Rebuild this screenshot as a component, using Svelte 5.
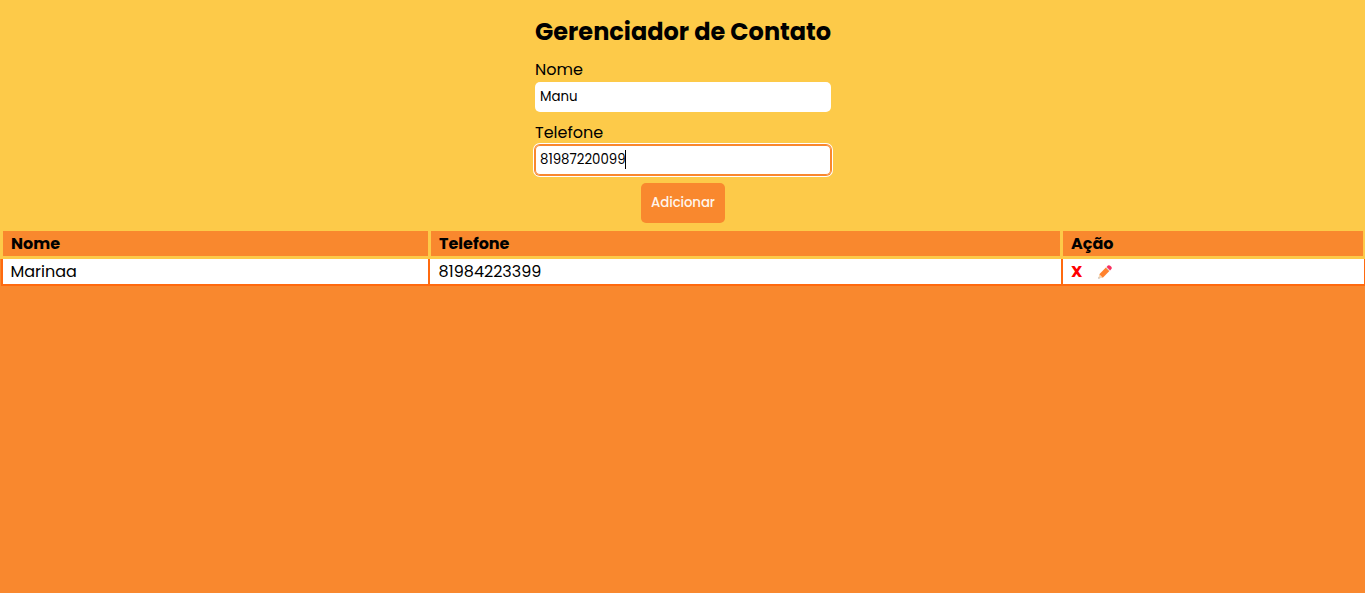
<script>
  let nome = $state('Manu');
  let telefone = $state('81987220099');
  const contatos = [{ nome: 'Marinaa', telefone: '81984223399' }];
</script>

<div class="page">
  <header>
    <form onsubmit={(e) => e.preventDefault()}>
      <h1>Gerenciador de Contato</h1>
      <label for="nome">Nome</label>
      <input id="nome" bind:value={nome} />
      <label for="telefone" class="second">Telefone</label>
      <div class="field">
        <input id="telefone" class="focused" bind:value={telefone} />
        <i class="caret"></i>
      </div>
      <button>Adicionar</button>
    </form>
  </header>
  <div class="row head">
    <div>Nome</div>
    <div>Telefone</div>
    <div>Ação</div>
  </div>
  {#each contatos as c}
    <div class="row data">
      <div class="name">{c.nome}</div>
      <div class="phone">{c.telefone}</div>
      <div class="actions">
        <b>X</b>
        <svg width="14" height="14" viewBox="0 0 14 14">
          <path d="M.4 13.6 1.3 9.2 4.8 12.7Z" fill="#f8d5b0" />
          <path d="M.4 13.6 .7 12.3 1.7 13.3Z" fill="#777" />
          <path d="M1.3 9.2 7.9 2.6 11.4 6.1 4.8 12.7Z" fill="#ff822d" />
          <path d="M7.9 2.6 8.6 1.9 12.1 5.4 11.4 6.1Z" fill="#d8e2e8" />
          <path d="M8.6 1.9 9.9.6Q11-.3 12.2.7L13.3 1.8Q14.3 3 13.4 4.1L12.1 5.4Z" fill="#f92f60" />
        </svg>
      </div>
    </div>
  {/each}
</div>

<style>
  :global(body) { margin: 0; background: #f9882e; }
  .page { height: 593px; overflow: hidden; background: #f9882e; color: #000; font: 16px/24px Poppins, Inter, sans-serif; }
  header { height: 231px; background: #fdca49; display: flex; justify-content: center; }
  form { width: 296px; padding: 14px 0 0 1px; display: flex; flex-direction: column; }
  h1 { margin: 0 0 8px; font-size: 24px; line-height: 36px; font-weight: 700; white-space: nowrap; }
  label { height: 24px; }
  label.second { margin-top: 9px; }
  input { display: block; box-sizing: border-box; width: 296px; height: 30px; padding: 0 5px; border: 0; border-radius: 5px; background: #fff; color: #000; font: 13.333px/20px Poppins, Inter, sans-serif; outline: none; }
  .field { position: relative; }
  .focused { box-shadow: inset 0 0 0 1px #f9882e, 0 0 0 1px #f9882e, 0 0 0 2px #fff; }
  .caret { position: absolute; left: 90px; top: 5px; width: 1px; height: 19px; background: #000; }
  button { align-self: center; width: 84px; height: 40px; margin-top: 8px; padding: 0; border: 0; border-radius: 5px; background: #f9882e; color: #fff5ec; font: 500 13.333px/20px Poppins, Inter, sans-serif; letter-spacing: -0.1px; }
  .row { display: grid; box-sizing: border-box; white-space: nowrap; }
  .head { grid-template-columns: 425px 629px 300px; gap: 3px; height: 28px; padding: 0 2px 3px 3px; background: #fdca49; font-weight: 700; }
  .head div { background: #f9882e; padding-left: 8px; line-height: 25px; }
  .data { grid-template-columns: 425px 631px 301px; gap: 2px; height: 27px; padding: 0 1px 2px 2px; margin-left: 1px; background: #ff6a0f; }
  .data div { background: #fff; padding-left: 8px; line-height: 25px; color: #000; }
  .data .name { padding-left: 7.5px; }
  .data .phone { padding-left: 8.5px; }
  .data .actions { display: flex; align-items: center; }
  b { width: 27px; color: #f00; }
</style>
